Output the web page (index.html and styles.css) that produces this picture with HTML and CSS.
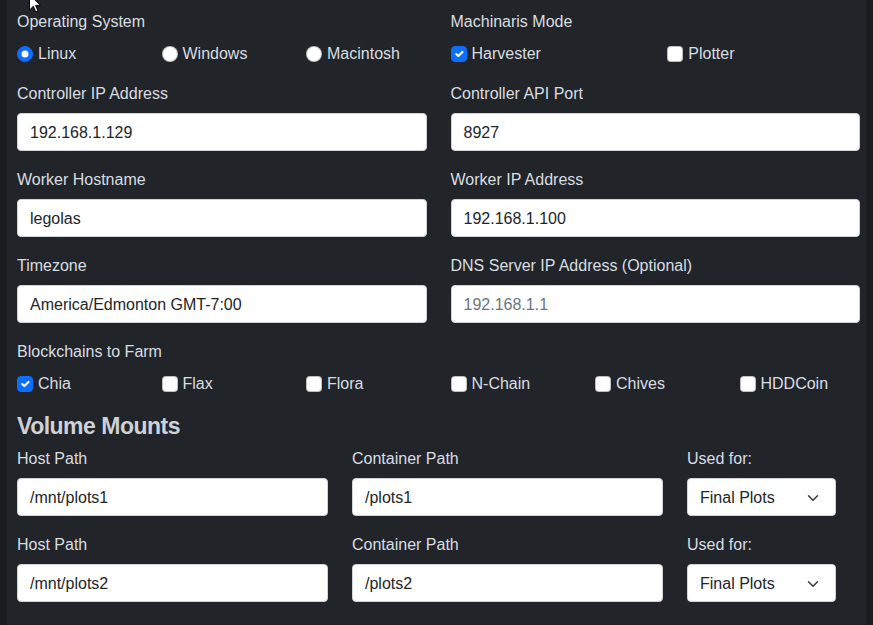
FILE: index.html
```html
<!DOCTYPE html>
<html lang="en">
<head>
<meta charset="utf-8">
<title>Machinaris Setup</title>
<link rel="stylesheet" href="styles.css">
</head>
<body>
<main class="panel">
  <div class="two-col">
    <div class="field">
      <div class="label">Operating System</div>
      <div class="opts opts-3">
        <span class="check"><span class="radio on"><svg viewBox="-4 -4 8 8"><circle r="2" fill="#fff"/></svg></span>Linux</span>
        <span class="check"><span class="radio"></span>Windows</span>
        <span class="check"><span class="radio"></span>Macintosh</span>
      </div>
    </div>
    <div class="field">
      <div class="label">Machinaris Mode</div>
      <div class="opts opts-2">
        <span class="check"><span class="box on"><svg viewBox="0 0 20 20"><path d="M6 10l3 3l6-6" fill="none" stroke="#fff" stroke-width="3" stroke-linecap="round" stroke-linejoin="round"/></svg></span>Harvester</span>
        <span class="check"><span class="box"></span>Plotter</span>
      </div>
    </div>

    <div class="field">
      <div class="label">Controller IP Address</div>
      <input class="input" type="text" value="192.168.1.129">
    </div>
    <div class="field">
      <div class="label">Controller API Port</div>
      <input class="input" type="text" value="8927">
    </div>

    <div class="field">
      <div class="label">Worker Hostname</div>
      <input class="input" type="text" value="legolas">
    </div>
    <div class="field">
      <div class="label">Worker IP Address</div>
      <input class="input" type="text" value="192.168.1.100">
    </div>

    <div class="field">
      <div class="label">Timezone</div>
      <input class="input" type="text" value="America/Edmonton GMT-7:00">
    </div>
    <div class="field">
      <div class="label">DNS Server IP Address (Optional)</div>
      <input class="input" type="text" placeholder="192.168.1.1">
    </div>
  </div>

  <div class="field">
    <div class="label">Blockchains to Farm</div>
    <div class="opts opts-6">
      <span class="check"><span class="box on"><svg viewBox="0 0 20 20"><path d="M6 10l3 3l6-6" fill="none" stroke="#fff" stroke-width="3" stroke-linecap="round" stroke-linejoin="round"/></svg></span>Chia</span>
      <span class="check"><span class="box"></span>Flax</span>
      <span class="check"><span class="box"></span>Flora</span>
      <span class="check"><span class="box"></span>N-Chain</span>
      <span class="check"><span class="box"></span>Chives</span>
      <span class="check"><span class="box"></span>HDDCoin</span>
    </div>
  </div>

  <h4 class="heading">Volume Mounts</h4>

  <div class="mounts">
    <div class="field">
      <div class="label">Host Path</div>
      <input class="input" type="text" value="/mnt/plots1">
    </div>
    <div class="field">
      <div class="label">Container Path</div>
      <input class="input" type="text" value="/plots1">
    </div>
    <div class="field">
      <div class="label">Used for:</div>
      <div class="select"><span>Final Plots</span><svg class="chev" viewBox="0 0 16 16"><path d="M2 5l6 6 6-6" fill="none" stroke="#343a40" stroke-width="2" stroke-linecap="round" stroke-linejoin="round"/></svg></div>
    </div>

    <div class="field">
      <div class="label">Host Path</div>
      <input class="input" type="text" value="/mnt/plots2">
    </div>
    <div class="field">
      <div class="label">Container Path</div>
      <input class="input" type="text" value="/plots2">
    </div>
    <div class="field">
      <div class="label">Used for:</div>
      <div class="select"><span>Final Plots</span><svg class="chev" viewBox="0 0 16 16"><path d="M2 5l6 6 6-6" fill="none" stroke="#343a40" stroke-width="2" stroke-linecap="round" stroke-linejoin="round"/></svg></div>
    </div>
  </div>
</main>
<svg class="cursor" viewBox="0 0 13 20" width="13" height="20"><path d="M0.5 0.5 L0.5 16 L4.3 12.3 L6.8 18 L9 17 L6.6 11.4 L11.6 11.4 Z" fill="#fff" stroke="#000" stroke-width="1" stroke-linejoin="miter"/></svg>
</body>
</html>
```

FILE: styles.css
```css
html, body {
  margin: 0;
  padding: 0;
}

body {
  background: #1a1d20;
  font-family: "Liberation Sans", Arial, sans-serif;
  font-size: 16px;
  line-height: 1.5;
  color: #d9dde1;
  height: 625px;
  overflow: hidden;
  position: relative;
}

.panel {
  margin-left: 7px;
  width: 859px;
  height: 625px;
  box-sizing: border-box;
  background: #212529;
  padding: 9px 6px 0 10px;
}

.two-col {
  display: grid;
  grid-template-columns: 1fr 1fr;
  column-gap: 24px;
}

.field {
  margin-bottom: 16px;
  min-width: 0;
}

.label {
  margin-bottom: 8px;
  padding-top: 1px;
  height: 23px;
  white-space: nowrap;
}

.opts {
  display: grid;
  column-gap: 24px;
  padding-top: 1px;
  height: 23px;
}

.opts-2 { grid-template-columns: repeat(2, 1fr); }
.opts-3 { grid-template-columns: repeat(3, 1fr); }
.opts-6 { grid-template-columns: repeat(6, 1fr); }

.check {
  display: flex;
  align-items: center;
  gap: 5px;
  white-space: nowrap;
}

.radio, .box {
  width: 16px;
  height: 16px;
  box-sizing: border-box;
  background: #fff;
  border: 1px solid rgba(0, 0, 0, 0.25);
  flex: none;
  display: flex;
}

.radio { border-radius: 50%; }
.box { border-radius: 4px; }

.radio.on, .box.on {
  background: #0d6efd;
  border-color: #0d6efd;
}

.radio svg, .box svg {
  width: 100%;
  height: 100%;
}

.input {
  display: block;
  width: 100%;
  height: 38px;
  box-sizing: border-box;
  padding: 7px 12px 5px;
  margin: 0;
  font-family: inherit;
  font-size: 16px;
  line-height: 1.5;
  color: #212529;
  background: #fff;
  border: 1px solid #ced4da;
  border-radius: 4px;
}

.input::placeholder {
  color: #6c757d;
  opacity: 1;
}

.heading {
  margin: 0 0 5px;
  padding-top: 1px;
  font-size: 23px;
  font-weight: 700;
  line-height: 29px;
  letter-spacing: -0.5px;
  color: #ced2d6;
}

.mounts {
  display: grid;
  grid-template-columns: 311px 311px 1fr;
  column-gap: 24px;
}

.select {
  width: 149px;
  height: 38px;
  box-sizing: border-box;
  padding: 7px 14px 5px 12px;
  background: #fff;
  color: #212529;
  border: 1px solid #ced4da;
  border-radius: 4px;
  display: flex;
  align-items: center;
  justify-content: space-between;
}

.chev {
  width: 16px;
  height: 12px;
}

.cursor {
  position: absolute;
  left: 29px;
  top: -6px;
}
```
